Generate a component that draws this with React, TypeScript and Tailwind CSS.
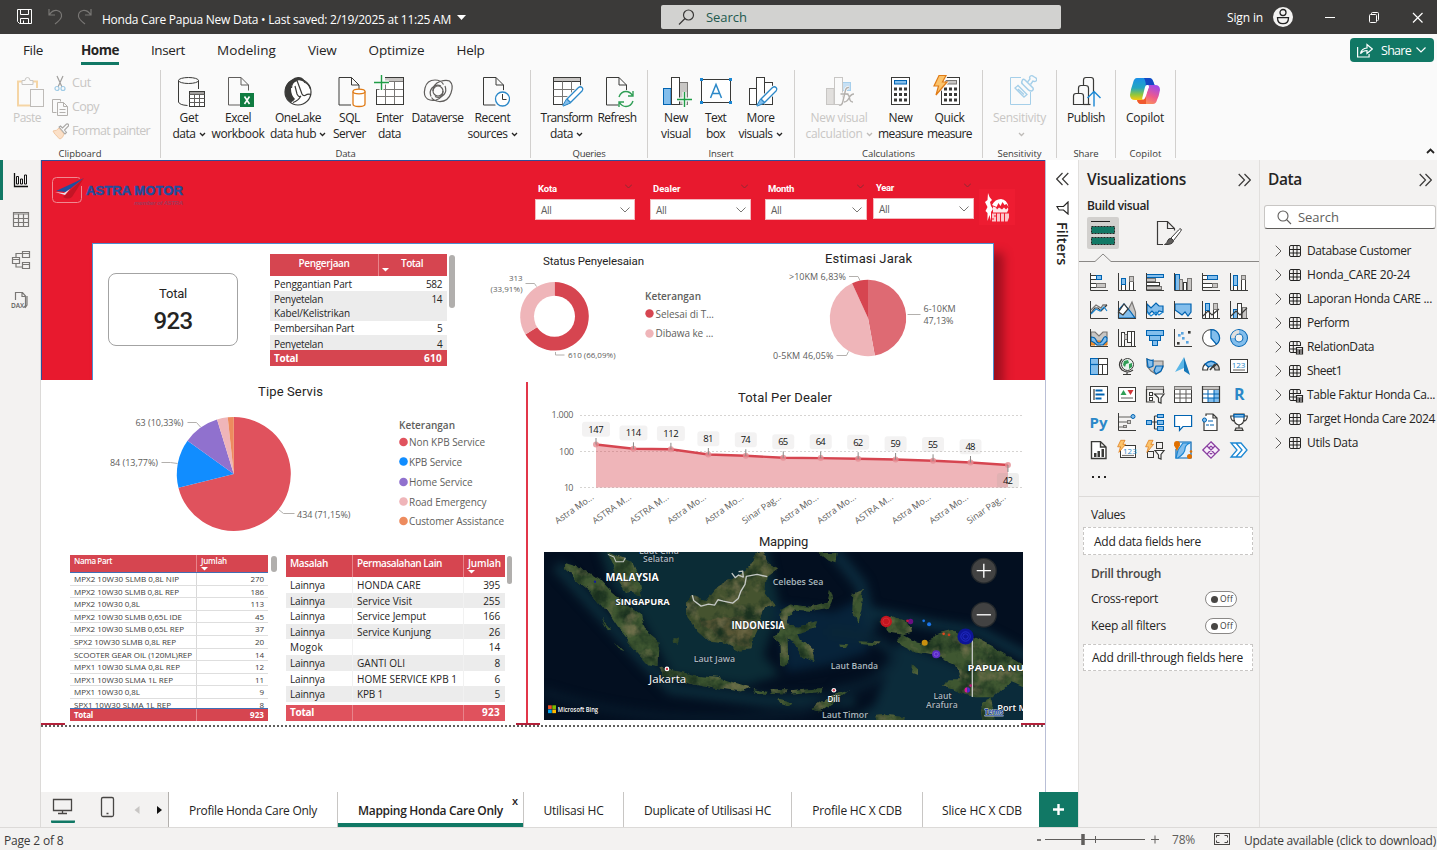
import React, { useLayoutEffect, useRef, useState } from "react";

const INK = "#3a3a38";
const BLUE = "#0063b1";
const SKY = "#83beec";
const GREY = "#c8c6c4";

/* Text that is tracked so that it takes up the given width. */
function Fit({ t, w, className = "" }: { t: string; w: number; className?: string }) {
  const ref = useRef<HTMLSpanElement>(null);
  const [ls, setLs] = useState(0);
  useLayoutEffect(() => {
    if (ref.current) setLs((w - ref.current.getBoundingClientRect().width) / t.length);
  }, []);
  return (
    <span ref={ref} className={"inline-block self-start whitespace-nowrap " + className} style={{ letterSpacing: ls + "px" }}>
      {t}
    </span>
  );
}

/* Chart text, vertically centred on y. */
function Tx({ x, y, w, s = 9, fill = "#605e5c", a = "start", b = 400, f = "Open Sans", children, rot }: any) {
  return (
    <text
      x={x}
      y={y + s * 0.36}
      textLength={w}
      fontSize={s}
      fill={fill}
      textAnchor={a}
      fontWeight={b}
      fontFamily={`"${f}", "Liberation Sans", sans-serif`}
      transform={rot}
    >
      {children}
    </text>
  );
}

const Chev = ({ c = "#252423" }: { c?: string }) => (
  <svg width="7" height="5" viewBox="0 0 7 5" fill="none" className="ml-[3px]">
    <path d="M1 1l2.5 2.5L6 1" stroke={c} strokeWidth="1.3" />
  </svg>
);

/* ---------- Ribbon icons, 34 x 34 ---------- */
const Doc = ({ x = 6.5, c = INK }: { x?: number; c?: string }) => (
  <g transform={`translate(${x} 3.5)`} fill="none" stroke={c}>
    <path d="M12 27.5H0V0h12.5l7.5 7.5V13" />
    <path d="M12.5 0v7.5H20" />
  </g>
);
const Pencil = ({ x, y }: { x: number; y: number }) => (
  <g transform={`translate(${x} ${y})`}>
    <path d="M5 13L16.5 1.5q2-1.5 3.500 0t0 3.500L8.500 16.500z" fill="#fff" stroke="#fafafa" strokeWidth="3" />
    <path d="M5 13L16.500 1.500q2-1.500 3.500 0t0 3.500L8.500 16.500z" fill="#fff" stroke="#2b88c8" strokeWidth="1.300" />
    <path d="M4.500 13l4 4-7 3q-1 0-.5-1z" fill={SKY} stroke="#2b88c8" />
  </g>
);
const Plus = ({ x, y }: { x: number; y: number }) => (
  <g transform={`translate(${x} ${y})`}>
    <path d="M-7.500 0h15M0-7.500v15" stroke="#fafafa" strokeWidth="4" />
    <path d="M-7.500 0h15M0-7.500v15" stroke="#1f9d46" strokeWidth="1.400" />
  </g>
);
const Calc = ({ x = 0 }: { x?: number }) => (
  <g transform={`translate(${x} 0)`}>
    <rect x="7.500" y="3.500" width="18" height="27" fill="#fff" stroke={INK} />
    {[0, 1, 2].map((r) => [0, 1, 2].map((c) => <rect key={r + "" + c} x={10 + c * 5} y={13.500 + r * 5.500} width="3" height="3" fill={INK} />))}
  </g>
);
const Bolt = ({ s = 1 }: { s?: number }) => (
  <path transform={`scale(${s})`} d="M6 .5h7L9.500 7H14L3 20l2.500-9H1z" fill="#fbc36b" stroke="#e07b16" strokeWidth="1.200" />
);

const ribbonArt: Record<string, React.ReactNode> = {
  get: (
    <g fill="none" stroke={INK}>
      <path d="M6.500 6.500V28q1 3 9 3.500M26.500 6.500V15" />
      <ellipse cx="16.500" cy="6.500" rx="10" ry="3" />
      <rect x="17.500" y="17.500" width="15" height="15" fill="#fff" />
      <path d="M18 19h14" strokeWidth="2" stroke="#a19f9d" />
      <path d="M17.500 20.500h15M17.500 24.500h15M17.500 28.500h15M22.500 20v12M27.500 20v12" stroke="#605e5c" />
    </g>
  ),
  excel: (
    <g>
      <Doc c="#605e5c" x={7.5} />
      <rect x="19" y="19" width="14" height="14" fill="#107c41" />
      <path d="M23.500 22.500l5 7.500M28.500 22.500l-5 7.500" stroke="#fff" strokeWidth="1.600" />
    </g>
  ),
  lake: (
    <g fill="none" stroke={INK} strokeWidth="1.200">
      <circle cx="17" cy="18" r="13" fill="#fff" />
      <path d="M11 5.500Q14 2.500 18 3q5 .5 6.500 6-5-4-9.500-2-5 2-5 8 0 6 4 10-3 4-4.500 3Q3.500 24 4 16.500 4.500 9 11 5.500z" fill={INK} stroke="none" />
      <path d="M10.500 14q0-6 5.500-7.500L21 20q1 2 3 1.500 3-2 6-1M20 22q-3 5-8 6.500M14 12l2 8q2 4 4 2M23 8q5 2 6.500 7" />
    </g>
  ),
  sql: (
    <g>
      <Doc x={6} />
      <path d="M20 17.500v12.500q0 2.500 6 2.500t6-2.500V17.500" fill="#fff" stroke="#e07b16" strokeWidth="1.300" />
      <ellipse cx="26" cy="17.500" rx="6" ry="2.300" fill="#fff" stroke="#e07b16" strokeWidth="1.300" />
    </g>
  ),
  enter: (
    <g fill="none" stroke={INK}>
      <rect x="3.500" y="3.500" width="27" height="27" fill="#fff" />
      <rect x="4" y="4" width="26" height="3" fill={GREY} stroke="none" />
      <path d="M3.500 7.500h27M3.500 15.500h27M3.500 22.500h27M12.500 7.500v23M21.500 7.500v23" stroke="#797775" />
      <path d="M0 0h12v15H0z" fill="#fafafa" stroke="none" />
      <Plus x={8.5} y={8.5} />
      <path d="M3.500 16v14.500h27V3.500" />
    </g>
  ),
  verse: (
    <g fill="none" stroke="#605e5c" strokeWidth="1.200">
      <circle cx="17" cy="17" r="5" />
      <path d="M22 17q0 7-7 9-5 1-8.500-1Q2 22 4 14q2-8 10-8 6 0 8.500 4.500M12 17q0-7 7-9.500 6-2 9.500-.5Q33 11 30 19q-3 9-12 8.500-5-.5-7.500-4" />
      <path d="M10 22.500q-2-5 1-8.500 4-4.500 9-2M24 12q2 5-1 8.500-4 4.500-9 2" />
    </g>
  ),
  recent: (
    <g>
      <Doc x={7.5} />
      <circle cx="26.500" cy="25" r="9" fill="#fafafa" />
      <circle cx="26.500" cy="25" r="7" fill="#fff" stroke="#2b88c8" strokeWidth="1.300" />
      <path d="M26.500 20v5.500h4" fill="none" stroke={INK} />
    </g>
  ),
  transform: (
    <g fill="none" stroke="#797775">
      <rect x="3.500" y="3.500" width="27" height="27" fill="#fff" stroke={INK} />
      <path d="M4 4h26v3.500H4z" fill={GREY} stroke="none" />
      <path d="M3.500 7.500h27" stroke={INK} />
      <path d="M3.500 15.500h27M3.500 22.500h27M12.500 7.500v23M21.500 7.500v23" />
      <path d="M16 32l8-8 8-10v18z" fill="#fafafa" stroke="none" />
      <Pencil x={12} y={12} />
    </g>
  ),
  refresh: (
    <g>
      <Doc x={6.5} />
      <circle cx="26" cy="25" r="9" fill="#fafafa" />
      <path d="M19 23q2-5.500 7-5.500 4 0 6.500 4M33 17v5h-5M33 27q-2 5.500-7 5.500-4 0-6.500-4M19 33v-5h5" fill="none" stroke="#2f9e55" strokeWidth="1.400" />
    </g>
  ),
  newvis: (
    <g>
      <rect x="4.500" y="14.500" width="7.500" height="16" fill={SKY} stroke={BLUE} />
      <rect x="20.500" y="8.500" width="8" height="22" fill={GREY} stroke="#797775" />
      <rect x="12.500" y="3.500" width="8" height="27" fill="#fff" stroke={INK} />
      <Plus x={25.5} y={25.5} />
    </g>
  ),
  textbox: (
    <g>
      <rect x="2.500" y="5.500" width="29" height="23" fill="#fff" stroke={INK} />
      {[1, 30].map((x) => [4, 27].map((y) => <rect key={x + "-" + y} x={x} y={y} width="3" height="3" fill="#1b87d3" />))}
      <path d="M11.500 24L17 10.500 22.500 24M13.500 19.500h7" fill="none" stroke="#2b88c8" strokeWidth="1.500" />
    </g>
  ),
  more: (
    <g fill="#fff" stroke={INK}>
      <rect x="5.500" y="14.500" width="7" height="16" />
      <rect x="20.500" y="8.500" width="8" height="22" />
      <rect x="12.500" y="3.500" width="8" height="27" />
      <Pencil x={12} y={12} />
    </g>
  ),
  fx: (
    <g>
      <rect x="4.500" y="14.500" width="7.500" height="16" fill="#e1dfdd" stroke={GREY} />
      <rect x="20.500" y="8.500" width="8" height="8" fill="#c7e0f4" stroke="#a7cfec" />
      <rect x="12.500" y="3.500" width="8" height="27" fill="#fafafa" stroke={GREY} />
      <path d="M17 31q3 1 4-4l2.500-11q1-3 3.500-2.500M18.500 20h8M24 20q3 0 3.500 4t3.500 4M32 20q-3 0-5 4t-5 4" fill="none" stroke="#fafafa" strokeWidth="3" />
      <path d="M17 31q3 1 4-4l2.500-11q1-3 3.500-2.500M18.500 20h8M24 20q3 0 3.500 4t3.500 4M32 20q-3 0-5 4t-5 4" fill="none" stroke="#b3b0ad" strokeWidth="1.400" />
    </g>
  ),
  calc: (
    <g>
      <Calc />
      <rect x="10.500" y="6.500" width="12" height="3.500" fill={SKY} stroke={BLUE} />
    </g>
  ),
  quick: (
    <g>
      <Calc x={1} />
      <rect x="12.500" y="6.500" width="11" height="3.500" fill={GREY} stroke="#797775" />
      <g transform="translate(0 1)">
        <path d="M6 0h9l-3 7h4L3 22l-2-8z" fill="#fafafa" />
        <Bolt />
      </g>
    </g>
  ),
  sens: (
    <g fill="none" stroke="#a5cfe9">
      <path d="M18 3.500H7.500v27h20V18" />
      <path d="M12 14l3-2.500 9 9L21 23zM15 15l6 5.500" strokeWidth="1.300" />
      <path d="M19 7q1-3 3-1l8 8q1 2-1.500 3-2 0-3-1l-5.500-5.500Q18 9 19 7z" fill="#fafafa" strokeWidth="1.500" />
      <path d="M24.500 8L27 5q-1-2 .5-3t3 .5L33 4q1.500 2 0 3t-3 0L27.500 10.500" strokeWidth="1.400" />
    </g>
  ),
  publish: (
    <g fill="#fafafa" stroke={INK} strokeWidth="1.200">
      <path d="M14.500 12V6q0-2.500 2.500-2.500h5q2.500 0 2.500 2.500v24.500h-5V20" />
      <path d="M9.500 20v-6q0-2.500 2.500-2.500h4.500q3 0 3 2.500v16.500h-5" />
      <path d="M4.500 30.500V22q0-2.500 2.500-2.500h5q2.500 0 2.500 2.500v8.500z" />
      <path d="M20.500 18h12v14h-12z" stroke="none" />
      <path d="M14.500 30.500h7" />
      <path d="M25 32.500v-14M18.500 24l6.500-6.500 6.500 6.500" fill="none" stroke="#1b87d3" strokeWidth="1.400" />
    </g>
  ),
  copilot: (
    <g>
      <defs>
        <linearGradient id="cpA" x1="0" y1="0" x2="0" y2="1">
          <stop offset="0" stopColor="#1a8fe8" />
          <stop offset=".45" stopColor="#23a6c0" />
          <stop offset=".75" stopColor="#8ec63f" />
          <stop offset="1" stopColor="#f9c80e" />
        </linearGradient>
        <linearGradient id="cpB" x1=".7" y1="0" x2=".2" y2="1">
          <stop offset="0" stopColor="#a44be8" />
          <stop offset=".5" stopColor="#ee5a8c" />
          <stop offset="1" stopColor="#ffa04d" />
        </linearGradient>
      </defs>
      <path d="M9 4h12q3 0 4 3l1.500 4h-5q-3 0-4 4l-3 11H7q-5 0-5-5 1-7 3-12 1-5 4-5z" fill="url(#cpA)" />
      <path d="M16 4h5q3 0 4 3l1.500 4h-5q-3 0-4 4 1-7-1.500-11z" fill="#1448c4" />
      <path d="M25 30H13q-3 0-4-4h5q3 0 4-4l3-11h6q5 0 5 5-1 6-3 10-1 4-4 4z" fill="url(#cpB)" />
      <path d="M18 30h-5q-3 0-4-4h5q3 0 4-4z" fill="#f0592e" />
      <path d="M20 11h-1q-1.500 0-2 2l-3 12q2 0 3-2l4-10z" fill="#fff" />
    </g>
  ),
};

type Btn = { i: string; w: number; a: [string, number]; b?: [string, number]; chev?: boolean; dim?: boolean };
const RibbonButton = ({ d }: { d: Btn }) => (
  <div className={"flex flex-col items-center text-[12px] leading-4 " + (d.dim ? "text-[#c8c6c4]" : "text-[#252423]")} style={{ width: d.w }}>
    <svg width="34" height="34" viewBox="0 0 34 34" className="shrink-0">
      {ribbonArt[d.i]}
    </svg>
    <div className="mt-[2px] h-4">
      <Fit t={d.a[0]} w={d.a[1]} />
    </div>
    <div className="flex h-4 items-center">
      {d.b && <Fit t={d.b[0]} w={d.b[1]} />}
      {d.chev && <Chev c={d.dim ? "#bebbb8" : "#252423"} />}
    </div>
  </div>
);
const Group = ({ w, pl, label, lw, items, children }: { w: string; pl?: string; label: string; lw: number; items?: Btn[]; children?: React.ReactNode }) => (
  <div className={"my-[2px] flex flex-col border-r border-[#d2d0ce] pt-1 " + w}>
    <div className={"flex h-[74px] shrink-0 " + (pl || "")}>
      {items && items.map((d, k) => <RibbonButton key={k} d={d} />)}
      {children}
    </div>
    <div className="flex h-3 justify-center text-[9.500px] leading-[12px] text-[#3b3a39]">
      <Fit t={label} w={lw} />
    </div>
  </div>
);

/* ---------- Visualization gallery icons, 18 x 18 ---------- */
const r = (x: number, y: number, w: number, h: number, k: "b" | "g" | "w" | "s" | "o" = "b") => {
  const m = { b: [SKY, BLUE], g: [GREY, "#797775"], w: ["#fff", INK], s: [INK, INK], o: ["none", INK] }[k];
  return <rect key={[x, y, w, h].join()} x={x + 0.5} y={y + 0.5} width={w} height={h} fill={m[0]} stroke={m[1]} />;
};
const ax = <path d="M.5 0v17.500H18" fill="none" stroke={INK} />;
const P = (d: string, s: string = INK, f: string = "none", w: number = 1.2) => <path key={d} d={d} stroke={s} fill={f} strokeWidth={w} />;
const T = (t: string, x: number, y: number, s: number, b = 400, c = "#2b88c8") => (
  <text x={x} y={y} fontSize={s} fontWeight={b} fill={c} fontFamily='"Open Sans", sans-serif'>
    {t}
  </text>
);
const vizIcons: React.ReactNode[] = [
  <>{r(0, 2, 6, 4, "w")}{r(6, 2, 5, 4)}{r(0, 10, 6, 4, "w")}{r(6, 10, 9, 4, "g")}{ax}</>,
  <>{r(3, 11, 4, 6, "w")}{r(3, 5, 4, 6)}{r(11, 8, 4, 9, "w")}{r(11, 3, 4, 5, "g")}{ax}</>,
  <>{r(0, 1, 17, 3)}{r(0, 5, 9, 3, "g")}{r(0, 9, 13, 3, "w")}{r(0, 13, 15, 3, "g")}{ax}</>,
  <>{r(1, 1, 4, 16)}{r(5, 6, 3, 11, "g")}{r(9, 9, 3, 8, "w")}{r(13, 5, 4, 12, "g")}{ax}</>,
  <>{r(0, 2, 5, 4, "w")}{r(5, 2, 10, 4)}{r(0, 10, 10, 4, "w")}{r(10, 10, 5, 4, "g")}{ax}</>,
  <>{r(3, 12, 4, 5, "w")}{r(3, 2, 4, 10)}{r(11, 6, 4, 11, "w")}{r(11, 2, 4, 4, "g")}{ax}</>,
  <>{ax}{P("M1 9l5-5 5 3 2-3h4", "#797775", "none", 1.3)}{P("M1 12l4-5 3 0 3 3 6-6", INK)}{P("M1 13l5-5 4 2 4-4 3 4", "#1b87d3")}</>,
  <>{P("M6 17L14 1l3.500 10v6z", "#797775", GREY)}{P("M.5 17V9L6 3l6 7 5 7z", BLUE, SKY)}{P("M.5 11L6 3l4 5-5 6z", INK, "#fff")}{ax}</>,
  <>{P("M1 3l4 4 5-5 3 3h4v6l-4-1-3 4-4-4-3 3-2-3z", BLUE, SKY)}{P("M1 11l4 4 5-4 3 3 4-3", "#1b87d3")}{ax}</>,
  <>{P("M1 3h16v8l-3 4-3-4-3 3-4-3-3-2z", BLUE, SKY)}{ax}</>,
  <>{r(3, 9, 4, 8, "w")}{r(3, 2, 4, 7)}{r(11, 8, 4, 9, "w")}{r(11, 2, 4, 6, "g")}{P("M1 15l5-5 4 4 7-6")}{ax}</>,
  <>{r(3, 8, 4, 9)}{r(7, 2, 4, 15, "w")}{r(12, 6, 4, 11, "g")}{P("M1 15l5-5 4 4 7-7")}{ax}</>,
  <>{P("M1 3h4l4 4 4-4h4v6l-4 4H8L1 8z", "#797775", GREY)}<path d="M1 12h4v4H1zM7 12h4v4H7zM13 12h4v4h-4z" fill="#f0953c" stroke="#e07b16" />{P("M1 8q4 0 5 3t3 3 4-4 4-1v3l-4 4H7q-3-3-6-4z", BLUE, SKY)}{ax}</>,
  <>{r(3, 3, 3, 14, "w")}{r(6, 5, 3, 5, "g")}{r(9, 2, 4, 11, "w")}{r(13, 2, 3, 15, "w")}{ax}</>,
  <>{r(0, 1, 17, 5)}{r(3, 6, 11, 5)}{r(6, 11, 5, 5)}</>,
  <>{ax}{[[4, 5, 0], [8, 8, 0], [14, 2, 1], [3, 13, 1], [12, 12, 0], [7, 3, 0]].map((q, i) => <rect key={i} x={q[0]} y={q[1]} width="2.600" height="2.600" fill={q[2] ? INK : "#5aa5e0"} />)}</>,
  <><circle cx="9" cy="9" r="8.400" fill="#fff" stroke={INK} />{P("M9 .6A8.400 8.400 0 0 1 14.500 15.400L9 9z", BLUE, SKY)}</>,
  <><circle cx="9" cy="9" r="6.200" fill="none" stroke={BLUE} strokeWidth="5.600" /><circle cx="9" cy="9" r="6.200" fill="none" stroke={SKY} strokeWidth="3.600" /><path d="M2.800 9A6.200 6.200 0 0 1 9 2.800" fill="none" stroke="#e1dfdd" strokeWidth="3.600" /></>,
  <>{r(0, 1, 8, 16)}{r(8, 1, 9, 6, "w")}{r(8, 7, 4, 10, "w")}{r(12, 7, 5, 10, "w")}{P("M.5 7.500h8", BLUE)}</>,
  <><circle cx="9.500" cy="7.500" r="6" fill="#e8f4ee" stroke={INK} /><path d="M6 4l4-1 1 3-3 1-1 3-2-2zM11 7l3-1v4l-3 2z" fill="#2f9e55" />{P("M4 2q-5 6 0 11 6 4 11 0M9 15v2M5 17.500h8")}</>,
  <>{P("M1 2l4 2h12v6l-3 5-4 2-5-3-4-5z", "#797775", GREY)}{P("M1 2q4 2 6 1v6q-3 2-5 1z", BLUE, SKY)}{P("M10 9h7l-2 5-5 3-2-3z", BLUE, SKY)}</>,
  <><path d="M10 0l6 18-6-4z" fill="#1577b8" /><path d="M10 0L1 15l9-4z" fill="#5bb7e8" /></>,
  <>{P("M.7 13q0-4 2.500-6l3.300 3q-1 1-1 3z", INK, "#fff")}{P("M3.200 7q6-5.500 11.600 0l-3.300 3q-2.500-2-5 0z", BLUE, SKY)}{P("M14.800 7q2.500 2 2.500 6h-4.300q0-2-1.500-3z", INK, GREY)}{P("M8 13l5-6", INK, "none", 1.6)}</>,
  <>{r(0, 2, 17, 13, "w")}{T("123", 1.7, 10.5, 8)}{P("M3 13h12", "#797775")}</>,
  <>{r(0, 1, 17, 16, "w")}{P("M4 4v11", INK)}{P("M5.500 5.500h7M5.500 9.500h9M5.500 13.500h6", BLUE, "none", 2)}</>,
  <>{r(0, 2, 17, 14, "w")}<path d="M2.500 10L5.500 5l3 5z" fill="#2f9e55" /><path d="M9.500 5h6l-3 5z" fill="#d13438" />{P("M3 13h12", "#797775")}</>,
  <>{r(0, 1, 17, 3, "g")}{P("M.5 4v13H9M17.500 4v4")}{r(3, 7, 3, 3, "w")}{r(3, 12, 3, 3, "w")}{P("M8.500 9h9.500L15 13v5l-2.500-1v-4z", INK, "#fff")}</>,
  <>{r(0, 1, 17, 16, "w")}{r(0, 1, 17, 3, "g")}{P("M.5 9h17M.5 13h17M6 5v12M12 5v12", "#605e5c", "none", 1)}</>,
  <>{r(0, 1, 17, 16, "w")}<path d="M12 5h6v12H6v-4h6z" fill={SKY} />{P("M.5 9h17M.5 13h17M6 5v12M12 5v12", BLUE, "none", 1)}{r(0, 1, 17, 3, "g")}{P("M.5 1v16.500H17.500V1")}</>,
  <>{T("R", 4, 15, 16, 700)}</>,
  <>{T("Py", -0.5, 14.5, 15, 700)}</>,
  <>{ax}{P("M1 4h12M1 9h8M1 14h4", "#605e5c")}<circle cx="15" cy="3.500" r="2" fill={SKY} stroke={BLUE} />{r(9, 7, 3, 3, "g")}{r(5, 12, 3, 2, "g")}</>,
  <>{P("M5 9h6M8.500 3v13M8.500 3H12M8.500 16H12")}{r(0, 7, 5, 4)}{r(11, 1, 6, 3)}{r(11, 7, 6, 4)}{r(11, 13, 6, 4)}</>,
  <>{P("M.6 2.500h17v11H9l-3.500 4v-4H.6z", BLUE, "#fff")}</>,
  <>{P("M2 9v8.500h13V5L11 1H4v2M11 1v4h4", INK, "#fff")}<circle cx="2.500" cy="7" r="2" fill={SKY} stroke={BLUE} />{P("M6 8h5M4 12h3M8 12h4", BLUE)}</>,
  <>{P("M4 1h10v5q0 5-5 6-5-1-5-6zM4 3H.7q0 5 4.500 5.500M14 3h3.300q0 5-4.500 5.500", INK, "#fff")}{P("M4 1.500h10v2.500H4z", BLUE, SKY)}{P("M9 12v3M5 17.500h8l-1-2.500H6z", INK, GREY)}</>,
  <>{P("M1.500.6h9L16 6v11.500H1.500zM10.500.6V6H16", INK, "#fff", 1.4)}<path d="M4 12h2.500v4H4zM7.500 10H10v6H7.500zM11.500 8H14v8h-2.500z" fill={INK} /></>,
  <>{r(2, 4, 15, 12, "w")}{T("123", 5, 12.5, 8)}{P("M4 14.500h12", "#797775")}<g transform="translate(-1 -1)"><Bolt s={0.62} /></g></>,
  <>{r(10, 1, 6, 6, "o")}{r(1, 10, 6, 6, "o")}{P("M9 9.500h9L15 13.500V18l-2.500-1v-3z", INK, "#fff")}<g transform="translate(-1 -1)"><Bolt s={0.62} /></g></>,
  <>{P("M4 1h13v16H2V8", BLUE, "#e5f1fb")}{P("M16 2q-5 2-5 6t-7 9H2l2-8 5-7z", "#1b87d3", SKY)}<circle cx="3" cy="3" r="3" fill="#e07000" /><path d="M0 4h6l-3 6z" fill="#e07000" /><circle cx="15.500" cy="15.500" r="2.500" fill="#e07000" /><circle cx="17" cy="10.500" r="1.300" fill="#e07000" /></>,
  <>{P("M9 .8L17.200 9 9 17.200.8 9z", "#8a3fa0", "#f8eefb", 1.3)}{P("M5 5l8 8M13 5l-8 8M9 5l2.500 2.500M9 13l-2.500-2.500M9 5L6.500 7.500M9 13l2.500-2.500", "#8a3fa0", "none", 1.1)}</>,
  <>{P("M1 2h10l6 7-6 7H1l6-7zM6 2l6 7-6 7", "#1b87d3", "#fff", 1.3)}</>,
];

/* ---------- Tables ---------- */
const parts: [string, number, string][] = [
  ["MPX2 10W30 SLMB 0,8L NIP", 105, "270"],
  ["MPX2 10W30 SLMB 0,8L REP", 105, "186"],
  ["MPX2 10W30 0,8L", 66, "113"],
  ["MPX2 10W30 SLMB 0,65L IDE", 108, "45"],
  ["MPX2 10W30 SLMB 0,65L REP", 110, "37"],
  ["SPX2 10W30 SLMB 0,8L REP", 102, "20"],
  ["SCOOTER GEAR OIL (120ML)REP", 118, "14"],
  ["MPX1 10W30 SLMA 0,8L REP", 106, "12"],
  ["MPX1 10W30 SLMA 1L REP", 99, "11"],
  ["MPX1 10W30 0,8L", 66, "9"],
  ["SPX1 10W30 SLMA 1L REP", 97, "8"],
];
const issues: [string, number, string, number, string][] = [
  ["Lainnya", 35, "HONDA CARE", 64, "395"],
  ["Lainnya", 35, "Service Visit", 55, "255"],
  ["Lainnya", 35, "Service Jemput", 69, "166"],
  ["Lainnya", 35, "Service Kunjung", 74, "26"],
  ["Mogok", 33, "", 0, "14"],
  ["Lainnya", 35, "GANTI OLI", 48, "8"],
  ["Lainnya", 35, "HOME SERVICE KPB 1", 100, "6"],
  ["Lainnya", 35, "KPB 1", 26, "5"],
];
const Caret = () => (
  <svg width="7" height="4" viewBox="0 0 7 4" className="shrink-0">
    <path d="M0 0h7L3.500 3.500z" fill="#fff" />
  </svg>
);

const WRow = ({ a, w, v, vw, c }: { a: string; w: number; v: string; vw: number; c: string }) => (
  <div className={"flex justify-between overflow-hidden pl-1 pr-[5px] " + c}>
    <Fit t={a} w={w} />
    <Fit t={v} w={vw} />
  </div>
);
const WorkTable = () => (
  <div className="ml-8 mt-[10px] flex h-[112px] w-[177px] flex-col overflow-hidden text-[10px] leading-[14px] text-[#252423]">
    <div className="flex h-[22px] shrink-0 bg-[#d64550] font-semibold text-white">
      <div className="flex w-[109px] justify-center border-r border-[#e8848b] pt-[2px]"><Fit t="Pengerjaan" w={51} /></div>
      <div className="flex grow pt-[2px]">
        <div className="ml-[3px] mt-[12px]"><Caret /></div>
        <div className="ml-[12px]"><Fit t="Total" w={22} /></div>
      </div>
    </div>
    <WRow a="Penggantian Part" w={78} v="582" vw={16} c="h-[15px] shrink-0 pt-[1px]" />
    <div className="flex h-[30px] shrink-0 justify-between bg-[#ececec] pl-1 pr-[5px] pt-[1px]">
      <div className="flex flex-col"><Fit t="Penyetelan" w={49} /><Fit t="Kabel/Kelistrikan" w={76} /></div>
      <Fit t="14" w={10.500} />
    </div>
    <WRow a="Pembersihan Part" w={80} v="5" vw={5} c="h-[14px] shrink-0" />
    <WRow a="Penyetelan" w={49} v="4" vw={5} c="h-[15px] shrink-0 pt-[2px] bg-[#ececec]" />
    <WRow a="Total" w={24} v="610" vw={18} c="h-[16px] shrink-0 pt-[1px] bg-[#d64550] text-white font-bold" />
  </div>
);

const PartsTable = () => (
  <div className="flex h-[166px] w-[198px] flex-col overflow-hidden text-[8px] text-[#3b3a39]">
    <div className="flex h-[18px] shrink-0 border-b border-[#3f6fb5] bg-[#d64550] font-semibold text-white">
      <div className="w-[127px] border-r border-[#e8848b] pl-1 leading-[12px]"><Fit t="Nama Part" w={38} /></div>
      <div className="flex flex-col pl-[4px] leading-[12px]"><Fit t="Jumlah" w={26} /><Caret /></div>
    </div>
    <div className="h-[135px] shrink-0 overflow-hidden">
      {parts.map((p) => (
        <div key={p[0]} className="flex h-[12.600px] border-b border-[#dedede] leading-[11px]">
          <div className="w-[127px] border-r border-[#d8d8d8] pl-1"><Fit t={p[0]} w={p[1]} /></div>
          <div className="grow pr-1 text-right"><Fit t={p[2]} w={p[2].length * 4.500} /></div>
        </div>
      ))}
    </div>
    <div className="flex h-[13px] shrink-0 border-t border-[#3f6fb5] bg-[#d64550] font-bold leading-[12px] text-white">
      <div className="w-[127px] border-r border-[#e8848b] pl-1"><Fit t="Total" w={19} /></div>
      <div className="grow pr-1 text-right"><Fit t="923" w={14} /></div>
    </div>
  </div>
);
const IssuesTable = () => (
  <div className="flex h-[166px] w-[219px] flex-col overflow-hidden text-[10px] leading-[15.600px] text-[#252423]">
    <div className="flex h-[22px] shrink-0 bg-[#d64550] font-semibold text-white">
      <div className="w-[67px] border-r border-[#e8848b] pl-1 pt-[1px]"><Fit t="Masalah" w={38} /></div>
      <div className="w-[111px] border-r border-[#e8848b] pl-1 pt-[1px]"><Fit t="Permasalahan Lain" w={85} /></div>
      <div className="flex flex-col pl-1 pt-[1px]"><Fit t="Jumlah" w={33} className="h-[14px]" /><Caret /></div>
    </div>
    {issues.map((p, k) => (
      <div key={k} className={"flex h-[15.600px] shrink-0 " + (k % 2 ? "bg-[#ececec]" : "")}>
        <div className="w-[67px] border-r border-[#f1f1f1] pl-1 pt-[1px]"><Fit t={p[0]} w={p[1]} /></div>
        <div className="w-[111px] border-r border-[#f1f1f1] pl-1 pt-[1px]">{p[2] && <Fit t={p[2]} w={p[3]} />}</div>
        <div className="grow pr-[5px] pt-[1px] text-right"><Fit t={p[4]} w={p[4].length * 5.600} /></div>
      </div>
    ))}
    <div className="mt-[3px] flex h-[16px] shrink-0 bg-[#e0525d] font-bold text-white">
      <div className="w-[67px] border-r border-[#e8848b] pl-1"><Fit t="Total" w={24} /></div>
      <div className="w-[111px] border-r border-[#e8848b]" />
      <div className="grow pr-[5px] text-right"><Fit t="923" w={18} /></div>
    </div>
  </div>
);

/* ---------- Charts ---------- */
const slice = (cx: number, cy: number, rad: number, a0: number, a1: number) => {
  const p = (a: number) => `${cx + rad * Math.sin(a * 2 * Math.PI)} ${cy - rad * Math.cos(a * 2 * Math.PI)}`;
  return `M${cx} ${cy}L${p(a0)}A${rad} ${rad} 0 ${a1 - a0 > 0.5 ? 1 : 0} 1 ${p(a1)}z`;
};
const Lead = ({ d }: { d: string }) => <path d={d} fill="none" stroke="#b3b0ad" />;

const StatusDonut = () => (
  <svg width="260" height="136" viewBox="480 244 260 136" className="ml-[25px] shrink-0">
    <Tx x={543} y={261} w={101} s={11.5} fill="#252423" f="Roboto">Status Penyelesaian</Tx>
    <path d={slice(554.5, 316.3, 34.3, 0, 0.6609)} fill="#d64550" />
    <path d={slice(554.5, 316.3, 34.3, 0.6609, 1)} fill="#efb5b9" />
    <circle cx="554.500" cy="316.300" r="20.500" fill="#fff" />
    <Lead d="M525.500 283.500h9l2 3" />
    <Lead d="M555.500 352v3h9" />
    <Tx x={509} y={278} w={13.500} s={8}>313</Tx>
    <Tx x={490.500} y={289} w={32} s={8}>(33,91%)</Tx>
    <Tx x={568} y={355} w={47.500} s={8}>610 (66,09%)</Tx>
    <Tx x={645} y={296.500} w={56} s={10} b={600}>Keterangan</Tx>
    <circle cx="649.500" cy="313.500" r="4.200" fill="#d64550" />
    <Tx x={655.500} y={314} w={58.500} s={10}>Selesai di T...</Tx>
    <circle cx="649.500" cy="333.500" r="4.200" fill="#efb5b9" />
    <Tx x={655.500} y={333.500} w={58} s={10}>Dibawa ke ...</Tx>
  </svg>
);
const DistancePie = () => (
  <svg width="240" height="136" viewBox="750 244 240 136" className="ml-[10px] shrink-0">
    <Tx x={825} y={258.500} w={87} s={13} fill="#252423" f="Roboto">Estimasi Jarak</Tx>
    <path d={slice(868, 318, 38.200, 0, 0.4713)} fill="#de6a73" />
    <path d={slice(868, 318, 38.200, 0.4713, 0.9317)} fill="#efb5b9" />
    <path d={slice(868, 318, 38.200, 0.9317, 1)} fill="#d64550" />
    <Lead d="M849 276.500h9l2 4" />
    <Lead d="M907.500 314.500h13" />
    <Lead d="M836.500 355.500h10l2-4" />
    <Tx x={789} y={276.500} w={57} s={9}>{">10KM 6,83%"}</Tx>
    <Tx x={923.500} y={309} w={32} s={9}>6-10KM</Tx>
    <Tx x={923.500} y={320.500} w={30} s={9}>47,13%</Tx>
    <Tx x={773} y={355.500} w={60.500} s={9}>0-5KM 46,05%</Tx>
  </svg>
);
const services: [string, string, number, number][] = [
  ["Non KPB Service", "#e0525d", 442, 76],
  ["KPB Service", "#118dff", 461.5, 53],
  ["Home Service", "#9071ce", 482, 63.5],
  ["Road Emergency", "#efb5b9", 501.5, 77.5],
  ["Customer Assistance", "#ed8b5e", 521, 95],
];
const ServicePie = () => {
  const cut = [0, 0.7115, 0.8492, 0.9525, 0.983, 1];
  return (
    <svg width="485" height="175" viewBox="41 380 485 175" className="shrink-0">
      <Tx x={258} y={391} w={65} s={13} fill="#252423" f="Roboto">Tipe Servis</Tx>
      {services.map((s, i) => (
        <path key={i} d={slice(233.800, 474, 57, cut[i], cut[i + 1])} fill={s[1]} />
      ))}
      <Lead d="M187.500 422.500h9l4 4.500" />
      <Lead d="M161.500 462.500h9l7 1" />
      <Lead d="M278.500 509.500l5 4h11" />
      <Tx x={135.500} y={423} w={48} s={9}>63 (10,33%)</Tx>
      <Tx x={110} y={463} w={48} s={9}>84 (13,77%)</Tx>
      <Tx x={297} y={514.500} w={53.500} s={9}>434 (71,15%)</Tx>
      <Tx x={399} y={425.500} w={56} s={10} b={600}>Keterangan</Tx>
      {services.map((s) => (
        <g key={s[0]}>
          <circle cx="403.500" cy={s[2]} r="4.300" fill={s[1]} />
          <Tx x={409} y={s[2] + 0.5} w={s[3]} s={10}>{s[0]}</Tx>
        </g>
      ))}
    </svg>
  );
};
const dealers: [string, number, number, string][] = [
  ["147", 444.5, 429.3, "Astra Mo..."],
  ["114", 448.8, 433, "ASTRA M..."],
  ["112", 449.3, 433.500, "ASTRA M..."],
  ["81", 454.5, 438.800, "Astra Mo..."],
  ["74", 455.8, 439.800, "Astra Mo..."],
  ["65", 457.8, 441.700, "Sinar Pag..."],
  ["64", 458.1, 441.700, "Astra Mo..."],
  ["62", 458.7, 442.300, "Astra Mo..."],
  ["59", 459.5, 443.800, "ASTRA M..."],
  ["55", 460.8, 444.500, "Astra Mo..."],
  ["48", 462.5, 446.800, "Astra Mo..."],
  ["42", 465, 480.500, "Sinar Pag..."],
];
const DealerChart = () => {
  const X = (i: number) => 596 + i * 37.450;
  const line = dealers.map((d, i) => `${X(i)} ${d[1]}`).join("L");
  return (
    <svg width="516" height="151" viewBox="528 380 516 151" className="shrink-0">
      <Tx x={738} y={397.500} w={94} s={13} fill="#252423" f="Roboto">Total Per Dealer</Tx>
      {[415.500, 451.500, 487.500].map((y) => (
        <path key={y} d={`M580 ${y}H1022`} stroke="#d6d4d2" strokeDasharray="2 2" />
      ))}
      <Tx x={551.500} y={415} w={22} s={9}>1.000</Tx>
      <Tx x={559} y={451.500} w={15} s={9}>100</Tx>
      <Tx x={564} y={487.500} w={9.500} s={9}>10</Tx>
      <path d={`M596 487.500L${line}V487.500z`} fill="#d64550" opacity=".4" />
      <path d={`M${line}`} fill="none" stroke="#d64550" strokeWidth="2.400" />
      {dealers.map((d, i) => (
        <g key={i}>
          <circle cx={X(i)} cy={d[1]} r="3" fill="#e58d94" opacity=".8" />
          <path d={i === 11 ? `M${X(i)} 465V472` : `M${X(i)} ${d[1]}v-6.500`} stroke="#8a8886" />
          <rect x={X(i) - (i < 3 ? 14 : 11)} y={d[2] - 7.500} width={i < 3 ? 28 : 22} height="15" rx="3" fill="#a09e9c" opacity={i === 11 ? 0.18 : 0.13} />
          <Tx x={X(i)} y={d[2]} w={i < 3 ? 15.500 : 10} s={9.500} fill="#111" a="middle">{d[0]}</Tx>
          <Tx x={X(i) - 4} y={496} w={45} s={9} a="end" rot={`rotate(-35 ${X(i) - 4} 495)`}>{d[3]}</Tx>
        </g>
      ))}
    </svg>
  );
};

const land = [
  "M103 55L160 72 200 98 236 138 285 178 325 205 336 250 383 290 380 362 350 358 306 308 262 252 228 200 180 140 145 112 103 72z",
  "M228 22L262 38 300 50 318 90 331 155 305 143 285 146 262 110 245 60z",
  "M480 152L522 165 548 132 602 102 648 66 668 30 690 24 706 55 734 70 700 95 695 140 727 182 695 192 680 230 662 270 655 312 620 316 580 296 532 290 495 256 465 212 464 175z",
  "M385 370L440 378 500 392 555 398 602 415 650 430 620 442 560 432 480 416 400 396z",
  "M656 432L702 440 700 446 660 442zM712 434L765 436 762 447 715 446zM772 438L866 428 862 440 776 448zM728 460L776 474 768 484 736 474zM836 492L870 468 900 445 944 432 910 462 860 498z",
  "M748 192L770 178 830 185 880 170 888 132 897 160 884 188 830 198 782 194 764 215 760 238 798 242 850 228 842 248 790 262 800 285 834 318 842 348 808 332 785 292 762 280 764 356 740 358 738 292 722 280 736 250z",
  "M856 21L907 21 904 52 884 44z",
  "M956 150L984 138 978 188 966 232 954 196zM972 288L1040 292 1036 300 978 297zM912 292L942 294 936 304 914 302z",
  "M1040 226L1075 214 1115 228 1132 262 1104 270 1142 292 1178 300 1196 268 1250 254 1312 275 1380 310 1440 345 1462 360 1462 425 1422 408 1372 456 1315 456 1260 436 1222 424 1236 402 1276 402 1260 360 1200 332 1140 322 1100 302 1084 284 1100 268 1058 262z",
  "M1130 355L1148 372 1144 392 1128 386zM1334 470L1364 456 1376 530 1342 530zM1024 512L1050 508 1112 516 1110 528 1030 528zM424 276L444 278 440 292 426 290zM212 218L240 250 230 252zM250 290L280 318 268 314z",
];
const MapLabel = ({ x, y, s, w, b = 700, c = "#fff", children }: any) => (
  <text x={x} y={y + s * 0.36} fontSize={s} textLength={w} lengthAdjust="spacingAndGlyphs" fontWeight={b} fill={c} stroke="#0a141c" strokeWidth="3" strokeOpacity=".7" paintOrder="stroke" fontFamily='"Open Sans", sans-serif'>
    {children}
  </text>
);
const MapVisual = () => (
  <svg width="479" height="168" viewBox="41 21 1418 503" preserveAspectRatio="none" className="block">
    <defs>
      <filter id="land" x="-5%" y="-5%" width="110%" height="110%" colorInterpolationFilters="sRGB">
        <feTurbulence type="fractalNoise" baseFrequency=".022" numOctaves="4" seed="4" result="n" />
        <feDisplacementMap in="SourceGraphic" in2="n" scale="22" xChannelSelector="R" yChannelSelector="G" result="d" />
        <feColorMatrix in="n" values="0 0 0 0 .10  0 0 0 0 .19  0 0 0 0 .12  2.4 0 0 0 -.95" result="k" />
        <feComposite in="k" in2="d" operator="in" result="kk" />
        <feColorMatrix in="n" values="0 0 0 0 .50  0 0 0 0 .47  0 0 0 0 .33  0 2 0 0 -1" result="t" />
        <feComposite in="t" in2="d" operator="in" result="tt" />
        <feMerge>
          <feMergeNode in="d" />
          <feMergeNode in="kk" />
          <feMergeNode in="tt" />
        </feMerge>
      </filter>
      <filter id="soft" x="-20%" y="-20%" width="140%" height="140%" colorInterpolationFilters="sRGB">
        <feGaussianBlur stdDeviation="14" />
      </filter>
    </defs>
    <path d="M0 0h1500v560H0z" fill="#030f20" />
    <g filter="url(#soft)">
      <path d="M200 0H700L740 190 690 330 740 390 640 420 420 390 330 220 240 120z" fill="#0b2c36" />
      <path d="M1090 290L1300 370 1500 400V560H880L1020 480z" fill="#0b2b3a" />
      <path d="M80 60L340 350 420 430 700 465 960 465" fill="none" stroke="#0b2a38" strokeWidth="38" />
      <path d="M720 180L900 200 1000 150 1000 320 880 360 760 380z" fill="#07233a" />
      <path d="M900 20L980 120 1010 260" fill="none" stroke="#0b2a3c" strokeWidth="36" />
      <path d="M1000 200L1200 240 1330 260 1500 350" fill="none" stroke="#0c2e3e" strokeWidth="30" />
      <path d="M880 260Q1060 270 1080 340 1040 420 900 440" fill="none" stroke="#0a2636" strokeWidth="26" />
      <path d="M40 440Q400 560 800 500L1050 400" fill="none" stroke="#071a2b" strokeWidth="24" />
    </g>
    <g filter="url(#land)">
      {land.map((d, i) => (
        <path key={i} d={d} fill={i === 2 ? "#45532f" : "#3f5731"} />
      ))}
      <path d="M500 225L655 210 650 305 580 290z" fill="#6b5a3c" opacity=".5" />
    </g>
    <g fill="none" stroke="#c3c7c4" strokeWidth="4" strokeLinejoin="round">
      <path d="M480 150L484 166 506 183 528 177 546 180 556 164 572 168 600 174 616 160 624 138 636 118 640 94 672 88 702 95" />
      <path d="M597 84l10 14 10-8 14 6-2-18-12 2" />
      <path d="M230 28l18 8 6 14 22 0 6-12" strokeWidth="3" />
      <path d="M1309 285V455" />
    </g>
    <MapLabel x={322} y={19} s={24} w={118} c="#a9b8c0" b={600}>Laut Cina</MapLabel>
    <MapLabel x={334} y={41} s={24} w={92} c="#a9b8c0" b={600}>Selatan</MapLabel>
    <MapLabel x={223} y={96} s={29} w={158}>MALAYSIA</MapLabel>
    <MapLabel x={253} y={170} s={25} w={160}>SINGAPURA</MapLabel>
    <MapLabel x={596} y={241} s={29} w={158}>INDONESIA</MapLabel>
    <MapLabel x={718} y={111} s={26} w={150} c="#a9b8c0" b={600}>Celebes Sea</MapLabel>
    <MapLabel x={484} y={340} s={25} w={123} c="#a9b8c0" b={600}>Laut Jawa</MapLabel>
    <MapLabel x={890} y={361} s={25} w={140} c="#a9b8c0" b={600}>Laut Banda</MapLabel>
    <MapLabel x={1194} y={453} s={25} w={54} c="#a9b8c0" b={600}>Laut</MapLabel>
    <MapLabel x={1172} y={479} s={25} w={94} c="#a9b8c0" b={600}>Arafura</MapLabel>
    <MapLabel x={864} y={509} s={25} w={136} c="#a9b8c0" b={600}>Laut Timor</MapLabel>
    <MapLabel x={352} y={400} s={34} w={110} b={400}>Jakarta</MapLabel>
    <MapLabel x={880} y={461} s={27} w={37} b={600}>Dili</MapLabel>
    <MapLabel x={1295} y={368} s={28} w={192}>PAPUA NUG</MapLabel>
    <MapLabel x={1383} y={487} s={28} w={88} b={600}>Port M</MapLabel>
    {[[405, 371], [899, 435]].map((p) => (
      <g key={p[0]}>
        <circle cx={p[0]} cy={p[1]} r="7" fill="#fff" />
        <circle cx={p[0]} cy={p[1]} r="3.500" fill="#d83b4b" />
      </g>
    ))}
    <circle cx="1054" cy="229" r="17" fill="#c4161f" />
    <circle cx="1054" cy="229" r="10" fill="none" stroke="#e2404a" strokeWidth="1.500" />
    <circle cx="1126" cy="229" r="8" fill="#6a0f80" />
    <circle cx="1117" cy="227" r="4" fill="#c4163a" />
    <circle cx="1165" cy="227" r="4" fill="#1b74e8" />
    <circle cx="1181" cy="237" r="6" fill="#1b74e8" />
    <circle cx="1224" cy="266" r="4" fill="#e2491e" />
    <circle cx="1240" cy="269" r="4" fill="#c8401a" />
    <circle cx="1168" cy="293" r="9" fill="#c8900f" />
    <circle cx="1202" cy="327" r="12" fill="#5a2bc4" />
    <circle cx="1202" cy="327" r="6" fill="none" stroke="#9c78ee" strokeWidth="1.500" />
    <circle cx="1289" cy="274" r="24" fill="#0d1496" />
    <circle cx="1289" cy="274" r="14" fill="none" stroke="#2a36d8" strokeWidth="2" />
    <circle cx="1289" cy="274" r="8" fill="none" stroke="#2a36d8" strokeWidth="2" />
    <path d="M1294 426a8 8 0 0 0 0 16z" fill="#d81b9a" />
    <path d="M1294 426a8 8 0 0 1 0 16z" fill="#4a2bd0" />
    <circle cx="1304" cy="421" r="4" fill="#c01878" />
    <rect x="189" y="107" width="6" height="6" fill="#141a9a" />
    {[77, 209].map((y) => (
      <g key={y}>
        <circle cx="1343" cy={y} r="39" fill="#22272b" />
        <circle cx="1343" cy={y} r="35" fill="#424242" />
        <path d={y === 77 ? "M1322 77h42M1343 56v42" : "M1322 209h42"} stroke="#fff" strokeWidth="4" />
      </g>
    ))}
    <path d="M53 480h11v11H53z" fill="#f25022" />
    <path d="M65.500 480h11v11h-11z" fill="#7fba00" />
    <path d="M53 492.500h11v11H53z" fill="#00a4ef" />
    <path d="M65.500 492.500h11v11h-11z" fill="#ffb900" />
    <MapLabel x={82} y={492} s={19} w={119} b={600}>Microsoft Bing</MapLabel>
    <text x="1346" y="507" fontSize="20" fontWeight="700" textLength="54" lengthAdjust="spacingAndGlyphs" fill="#1c3e9c" stroke="#dfe6ee" strokeWidth="2.500" paintOrder="stroke" textDecoration="underline" fontFamily='"Open Sans", sans-serif'>
      Terms
    </text>
  </svg>
);

const Slicer = ({ t, w, bw, cls }: { t: string; w: number; bw: string; cls: string }) => (
  <div className={"flex flex-col " + cls + " " + bw}>
    <div className="flex h-[15px] items-start justify-between pl-[3px] pr-[3px] font-['Roboto'] text-[9.500px] font-bold leading-[10px] text-white">
      <Fit t={t} w={w} />
      <svg width="7" height="5" viewBox="0 0 7 5" fill="none"><path d="M0 .5l3.500 3.500L7 .5" stroke="#8c2b33" /></svg>
    </div>
    <div className="flex h-[21px] items-center justify-between border border-[#f3b9be] bg-white pl-[5px] pr-1 text-[10px] leading-[21px] text-[#605e5c]">
      <Fit t="All" w={10.500} />
      <svg width="10" height="6" viewBox="0 0 10 6" fill="none"><path d="M.5.5L5 5 9.500.5" stroke="#797775" /></svg>
    </div>
  </div>
);

const dataTables: [string, number, boolean?][] = [
  ["Database Customer", 104],
  ["Honda_CARE 20-24", 103],
  ["Laporan Honda CARE ...", 125],
  ["Perform", 42],
  ["RelationData", 67, true],
  ["Sheet1", 35],
  ["Table Faktur Honda Ca...", 128, true],
  ["Target Honda Care 2024", 128],
  ["Utils Data", 51],
];

const Toggle = () => (
  <div className="flex h-[16px] w-[32px] items-center rounded-full border border-[#8a8886] bg-white pl-[5px]">
    <div className="h-[7px] w-[7px] rounded-full bg-[#484644]" />
    <Fit t="Off" w={13} className="ml-[2px] text-[8.500px] leading-[14px] text-[#3b3a39]" />
  </div>
);
const Dbl = ({ flip }: { flip?: boolean }) => (
  <svg width="13" height="14" viewBox="0 0 13 14" fill="none" className={flip ? "rotate-180" : ""}>
    <path d="M.7 1L6.500 7 .7 13M6.500 1l5.800 6-5.800 6" stroke="#3b3a39" strokeWidth="1.200" />
  </svg>
);

const pageTabs: [string, number, string][] = [
  ["Profile Honda Care Only", 128, "w-[169px]"],
  ["Mapping Honda Care Only", 145, "w-[186px]"],
  ["Utilisasi HC", 60, "w-[100px]"],
  ["Duplicate of Utilisasi HC", 127, "w-[168px]"],
  ["Profile HC X CDB", 89.5, "w-[131px]"],
  ["Slice HC X CDB", 80, "w-[116px] pl-[2px]"],
];

export default function App() {
  return (
    <div className="flex h-[850px] w-[1437px] flex-col overflow-hidden bg-[#fafafa] font-['Open_Sans','Liberation_Sans',sans-serif] text-[#252423]">
      {/* Title bar */}
      <div className="flex h-[34px] shrink-0 items-center bg-[#3b3a39] text-white">
        <svg width="80" height="18" viewBox="16 9 80 18" fill="none" className="ml-4 shrink-0">
          <path d="M17.500 10.500h14v14h-12l-2-2zM20.500 10.500v5h8v-5M20.500 24.500v-5h8v5M23.500 24.500v-3" stroke="#fff" />
          <path d="M49 10v6h6M49.500 15.500q3-4.500 7.500-4 5 1 4.500 6-.5 3-6.500 7.500" stroke="#797775" strokeWidth="1.200" />
          <path d="M91 10v6h-6M90.500 15.500q-3-4.500-7.500-4-5 1-4.500 6 .5 3 6.500 7.500" stroke="#797775" strokeWidth="1.200" />
        </svg>
        <Fit t="Honda Care Papua New Data • Last saved: 2/19/2025 at 11:25 AM" w={349} className="ml-[6px] text-[12px] leading-[40px]" />
        <svg width="9" height="5" viewBox="0 0 9 5" className="ml-[6px]"><path d="M0 0h9L4.500 5z" fill="#fff" /></svg>
        <div className="ml-[195px] flex h-[24px] w-[400px] items-center rounded-[2px] bg-[#d2d2d0] pl-[17px]">
          <svg width="17" height="17" viewBox="0 0 17 17" fill="none"><circle cx="10.500" cy="6" r="5" stroke="#3b3a39" strokeWidth="1.200" /><path d="M7 9.500L1 15.500" stroke="#3b3a39" strokeWidth="1.200" /></svg>
          <Fit t="Search" w={41} className="ml-[11px] text-[13px] leading-[24px] text-[#22594e]" />
        </div>
        <Fit t="Sign in" w={36} className="ml-[166px] text-[12px] leading-[35px]" />
        <svg width="20" height="20" viewBox="0 0 20 20" className="ml-[10px]">
          <circle cx="10" cy="10" r="10" fill="#f3f2f1" />
          <circle cx="10" cy="5.500" r="3" fill="none" stroke="#222" strokeWidth="1.300" />
          <path d="M4.500 10.700h11q0 6-5.500 6t-5.500-6z" fill="none" stroke="#222" strokeWidth="1.300" />
        </svg>
        <svg width="100" height="14" viewBox="1324 10 100 14" fill="none" className="ml-[31px]" stroke="#fff">
          <path d="M1325 17.500h10M1371.500 14.500v-1q0-1 1-1h5q1 0 1 1v6q0 1-1 1" />
          <rect x="1369.500" y="14.500" width="7" height="8" rx="1" fill="#3b3a39" />
          <path d="M1413 13l9.500 9.500M1422.500 13l-9.500 9.500" strokeWidth="1.200" />
        </svg>
      </div>

      {/* Menu */}
      <div className="flex h-[34px] shrink-0 items-start gap-8 pl-[23px] text-[13.500px] leading-[33px]">
        <Fit t="File" w={20} className="mr-[6px]" />
        <div className="flex flex-col">
          <Fit t="Home" w={38} className="h-[28px] font-bold" />
          <div className="h-[3px] w-[38px] bg-[#117865]" />
        </div>
        <Fit t="Insert" w={34} />
        <Fit t="Modeling" w={59} />
        <Fit t="View" w={28.500} />
        <Fit t="Optimize" w={56} />
        <Fit t="Help" w={28} />
        <div className="ml-auto mr-[3px] mt-1 flex h-[24px] w-[84px] items-center rounded bg-[#117865] pl-[7px] text-white">
          <svg width="16" height="15" viewBox="0 0 16 15" fill="none" stroke="#fff" strokeWidth="1.200"><path d="M.6 4v10h11.500v-3M3.500 10.500q1-5 6.500-5.500V1.500L15.300 6 10 10.500V7.500q-4 0-6.500 3z" /></svg>
          <Fit t="Share" w={30} className="ml-2 text-[12.500px] leading-[25px]" />
          <svg width="10" height="6" viewBox="0 0 10 6" fill="none" className="ml-[5px]"><path d="M.5.5L5 5 9.500.5" stroke="#fff" strokeWidth="1.200" /></svg>
        </div>
      </div>

      {/* Ribbon */}
      <div className="flex h-[92px] shrink-0">
        <Group w="w-[161px]" label="Clipboard" lw={43}>
          <div className="flex w-[50px] flex-col pl-[13px] text-[12px] leading-4 text-[#c8c6c4]">
            <svg width="34" height="34" viewBox="13 74 34 34" fill="none">
              <path d="M22 81.500h-4v24h12M32 81.500h5V88" stroke="#f5d5a5" strokeWidth="2" />
              <path d="M22 84.500v-4h3q0-3 2.500-3t2.500 3h3v4z" stroke="#c8c6c4" fill="#fafafa" />
              <rect x="30.500" y="89.500" width="13" height="17" fill="#fafafa" stroke="#bebbb8" />
            </svg>
            <div className="mt-[2px]"><Fit t="Paste" w={28} /></div>
          </div>
          <div className="flex flex-col pl-[2px] text-[12.500px] leading-[18px] text-[#c8c6c4]">
            <div className="flex h-[19px] items-center gap-1">
              <svg width="16" height="17" viewBox="0 0 16 17" fill="none"><path d="M5 1l5 11M11 1L6 12" stroke="#a19f9d" strokeWidth="1.200" /><circle cx="5" cy="13.500" r="2" stroke="#9fcbe6" strokeWidth="1.200" /><circle cx="11" cy="13.500" r="2" stroke="#9fcbe6" strokeWidth="1.200" /></svg>
              <Fit t="Cut" w={19} />
            </div>
            <div className="mt-[5px] flex h-[19px] items-center gap-1">
              <svg width="16" height="17" viewBox="0 0 16 17" fill="none" stroke="#b3b0ad"><path d="M4.500 13.500h-4V.5h8v2" /><path d="M5.500 3.500h6l4 4v9h-10zM11.500 3.500v4h4M7.500 10.500h6M7.500 13.500h6" /></svg>
              <Fit t="Copy" w={27} />
            </div>
            <div className="mt-[5px] flex h-[19px] items-center gap-1">
              <svg width="17" height="17" viewBox="0 0 17 17" fill="none"><path d="M1 8q4 0 6-3l5 6q-1 4-4 5-2-1-3-3-2-1-4-5z" fill="#fbe0c8" stroke="#f1c9a5" /><path d="M7 4l6 7 1.500-1.500-2-2.500 4-4q.500-2.500-2-2l-4 4-2-2z" fill="#fafafa" stroke="#a9a7a5" strokeWidth="1.100" /></svg>
              <Fit t="Format painter" w={78} className="-ml-px" />
            </div>
          </div>
        </Group>
        <Group
          w="w-[370px]" pl="pl-[5px]" label="Data" lw={20}
          items={[
            { i: "get", w: 46, a: ["Get", 19], b: ["data", 23], chev: true },
            { i: "excel", w: 52, a: ["Excel", 26], b: ["workbook", 53] },
            { i: "lake", w: 68, a: ["OneLake", 46], b: ["data hub", 46], chev: true },
            { i: "sql", w: 35, a: ["SQL", 21], b: ["Server", 33] },
            { i: "enter", w: 45, a: ["Enter", 27], b: ["data", 23] },
            { i: "verse", w: 51, a: ["Dataverse", 52] },
            { i: "recent", w: 59, a: ["Recent", 36], b: ["sources", 40], chev: true },
          ]}
        />
        <Group
          w="w-[117px]" pl="pl-[9px]" label="Queries" lw={33}
          items={[
            { i: "transform", w: 53, a: ["Transform", 52], b: ["data", 23], chev: true },
            { i: "refresh", w: 48, a: ["Refresh", 39] },
          ]}
        />
        <Group
          w="w-[147px]" pl="pl-[8px]" label="Insert" lw={25}
          items={[
            { i: "newvis", w: 40, a: ["New", 24], b: ["visual", 30] },
            { i: "textbox", w: 39, a: ["Text", 21], b: ["box", 19] },
            { i: "more", w: 51, a: ["More", 28], b: ["visuals", 34], chev: true },
          ]}
        />
        <Group
          w="w-[188px]" pl="pl-[6px]" label="Calculations" lw={53}
          items={[
            { i: "fx", w: 76, a: ["New visual", 57], b: ["calculation", 57], chev: true, dim: true },
            { i: "calc", w: 47, a: ["New", 24], b: ["measure", 45] },
            { i: "quick", w: 51, a: ["Quick", 30], b: ["measure", 45] },
          ]}
        />
        <Group w="w-[74px]" pl="pl-[6px]" label="Sensitivity" lw={44} items={[{ i: "sens", w: 61, a: ["Sensitivity", 53], chev: true, dim: true }]} />
        <Group w="w-[59px]" pl="pl-[2px]" label="Share" lw={25} items={[{ i: "publish", w: 54, a: ["Publish", 38] }]} />
        <Group w="w-[60px]" pl="pl-[2px]" label="Copilot" lw={32} items={[{ i: "copilot", w: 54, a: ["Copilot", 38] }]} />
        <svg width="9" height="6" viewBox="0 0 9 6" fill="none" className="mb-[6px] ml-auto mr-[2px] self-end"><path d="M1 5l3.500-3.500L8 5" stroke="#252423" strokeWidth="1.800" /></svg>
      </div>

      {/* Body */}
      <div className="flex h-[667px] shrink-0">
        <div className="w-[41px] shrink-0 border-r border-[#dcdad8] bg-[#f3f2f1]">
          <div className="flex h-[40px] w-[40px] items-center border-l-[3px] border-[#117865] pl-[10px]">
            <svg width="15" height="15" viewBox="0 0 15 15" fill="none" stroke="#111"><path d="M1.500 0v13.500H15" strokeWidth="1.300" /><path d="M3.500 3.500h2v7.500h-2zM7.500 6h2v5h-2zM11.500 2h2v9h-2z" /></svg>
          </div>
          <svg width="40" height="120" viewBox="0 200 40 120" fill="none" stroke="#797775">
            <path d="M13.500 212.500h15v14h-15zM13.500 214h15M13.500 218.500h15M13.500 222.500h15M18.500 214v12M23.500 214v12" strokeWidth="1.200" />
            <path d="M22.500 251.500h7v6h-7zM22.500 253.500h7M12.500 257.500h7v6h-7zM12.500 259.500h7M22.500 262.500h7v6h-7zM22.500 264.500h7M16 257v-3.500h6M16 264v3h6" strokeWidth="1.200" />
            <path d="M15.500 300v-7.500h7l3 3.500v9q0 2-2 2M22 292.500v4h3.500M27 296v9l-2 3" strokeWidth="1.200" />
            <text x="11" y="307.500" fontSize="6.500" fill="#605e5c" stroke="none" fontWeight="600" fontFamily='"Open Sans", sans-serif'>DAX</text>
          </svg>
        </div>

        <div className="flex w-[1037px] shrink-0 flex-col">
          <div className="flex h-[632px]">
            {/* Report canvas */}
            <div className="w-[1005px] shrink-0 border-r border-[#b9bfd6] bg-white">
              <div className="flex h-[220px] flex-col overflow-hidden border-l border-t border-[#2f4f98] bg-[#e8192e]">
                <div className="flex h-[82px] shrink-0 items-start">
                  <svg width="134" height="30" viewBox="51 176 134 30" className="ml-[9px] mt-[15px] shrink-0">
                    <rect x="52.500" y="177.500" width="29" height="25" rx="4" fill="none" stroke="#f08a92" />
                    <path d="M80 176h5v10h-5z" fill="#e8192e" />
                    <path d="M56 191L84 178 66 192z" fill="#1f4f9e" />
                    <path d="M84 178L72 197q-4 3-9 0z" fill="#c31525" />
                    <path d="M55 192l9 1 6-4-5 6z" fill="#e9dfe6" />
                    <text x="86" y="194.500" fontSize="12" fontWeight="700" textLength="97" lengthAdjust="spacingAndGlyphs" fill="#1f4f9e" stroke="#1f4f9e" strokeWidth=".5" fontFamily='"Liberation Sans", sans-serif'>ASTRA MOTOR</text>
                    <text x="134" y="205" fontSize="6" fontWeight="700" fontStyle="italic" textLength="49" fill="#a03a5c" fontFamily='"Liberation Sans", sans-serif'>member of ASTRA</text>
                  </svg>
                  <Slicer t="Kota" w={19} bw="w-[100px]" cls="ml-[350px] mt-[23px]" />
                  <Slicer t="Dealer" w={27.500} bw="w-[101px]" cls="ml-[15px] mt-[23px]" />
                  <Slicer t="Month" w={26} bw="w-[102px]" cls="ml-[14px] mt-[23px]" />
                  <Slicer t="Year" w={18} bw="w-[101px]" cls="ml-[6px] mt-[22px]" />
                  <svg width="36" height="36" viewBox="0 0 36 36" className="ml-[5px] mt-[28px]">
                    <rect width="36" height="36" fill="#ee1c31" />
                    <path d="M9 4l1.500 4 2.500 3-2 2 1 4 2 3-2 3v9l-1.500-6-2 6 0-8-2-2 2-4-2.500-5 2.500-2z" fill="#fff" />
                    <path d="M13 16Q16 10 22 10q6 .5 7.500 8l-2-3-2 1-2-3-2 4-2-3-2 4z" fill="#fff" />
                    <path d="M14 17.500l3 1 1 2 2-2 3 2 2-2 2 2 2-2q1 3-1 5H14z" fill="#fff" opacity=".9" />
                    <path d="M13 24.500h4v2h-2v1h2v5h-4v-2h2v-1h-2zM18 24.500h3v8h-3zM22 24.500h3v8h-3zM26 24.500h4v4l-1.500 4H26z" fill="#fff" opacity=".75" />
                  </svg>
                </div>
                <div className="ml-[50px] flex h-[137px] w-[902px] shrink-0 border border-b-0 border-[#4c8fd0] bg-white shadow-[9px_10px_10px_rgba(60,0,10,0.45)]">
                  <div className="ml-[15px] mt-[29px] flex h-[73px] w-[130px] shrink-0 flex-col rounded-[8px] border border-[#a3a3a3] font-['Roboto']">
                    <div className="mt-[12px] flex justify-center text-[13px] leading-[16px]"><Fit t="Total" w={28} /></div>
                    <div className="mt-[5px] flex justify-center text-[24px] font-medium leading-[28px]"><Fit t="923" w={39} /></div>
                  </div>
                  <WorkTable />
                  <div className="ml-[2px] mt-[11px] h-[53px] w-[6px] shrink-0 rounded-full bg-[#b1afad]" />
                  <StatusDonut />
                  <DistancePie />
                </div>
              </div>
              <div className="flex h-[343px]">
                <div className="flex w-[485px] shrink-0 flex-col">
                  <ServicePie />
                  <div className="flex pl-[29px]">
                    <PartsTable />
                    <div className="ml-[3px] mt-[1px] h-[16px] w-[6px] rounded-full bg-[#b1afad]" />
                    <div className="ml-[9px]"><IssuesTable /></div>
                    <div className="ml-[2px] mt-[1px] h-[28px] w-[5px] rounded-full bg-[#b1afad]" />
                  </div>
                </div>
                <div className="mt-[2px] h-[341px] w-[2px] shrink-0 bg-[#e2364a]" />
                <div className="flex grow flex-col">
                  <DealerChart />
                  <div className="flex h-[21px] justify-center pr-[6px] font-['Roboto'] text-[13px] leading-[21px]"><Fit t="Mapping" w={49} /></div>
                  <div className="pl-[16px]"><MapVisual /></div>
                </div>
              </div>
              <div className="flex h-[2px]">
                <div className="h-[2px] w-[24px] bg-[#b3213a]" />
                <div className="ml-[451px] h-[2px] w-[24px] bg-[#b3213a]" />
                <div className="ml-auto h-[2px] w-[24px] bg-[#b3213a]" />
              </div>
              <div className="h-[2px] bg-[repeating-linear-gradient(90deg,#605e5c_0px,#605e5c_2px,#ffffff_2px,#ffffff_4px)]" />
            </div>
            {/* Filters pane */}
            <div className="flex w-[32px] flex-col items-center bg-white pt-[12px]">
              <Dbl flip />
              <svg width="13" height="14" viewBox="0 0 13 14" fill="none" className="mt-[15px]"><path d="M12 1v12L7.500 9H3L1 5.500h6.500z" stroke="#252423" strokeWidth="1.200" /></svg>
              <div className="mt-[7px] text-[14.500px] font-semibold leading-[16px] [writing-mode:vertical-rl]">Filters</div>
            </div>
          </div>
          {/* Page tabs */}
          <div className="flex h-[35px] bg-white text-[12px]">
            <div className="flex w-[128px] shrink-0 border-r border-[#b3b0ad] bg-[#f3f2f1]">
              <svg width="127" height="35" viewBox="41 792 127 35" fill="none">
                <path d="M53.500 799.500h18v11h-18zM62.500 811v2.500M58 813.500h9" stroke="#484644" strokeWidth="1.300" />
                <path d="M51 820.500h24v1.500q0 1-1 1H52q-1 0-1-1z" fill="#117865" />
                <rect x="101.500" y="797.500" width="12" height="19" rx="1.500" stroke="#484644" strokeWidth="1.300" />
                <path d="M106.500 813.500h2" stroke="#484644" strokeWidth="1.500" />
                <path d="M139.500 806v8l-5-4z" fill="#c8c6c4" />
                <path d="M157 806v8l5-4z" fill="#111" />
              </svg>
            </div>
            {pageTabs.map((p, i) => (
              <div key={p[0]} className={"flex shrink-0 flex-col " + p[2] + (i < 5 ? " border-r border-[#c8c6c4]" : "")}>
                <div className={"flex h-[31px] justify-center leading-[38px] " + (i === 1 ? "font-semibold" : "")}>
                  <Fit t={p[0]} w={p[1]} className={i === 1 ? "ml-[13px]" : ""} />
                  {i === 1 && <span className="-mr-1 ml-[9px] w-[8px] text-[11px] leading-[18px]">x</span>}
                </div>
                {i === 1 && <div className="h-[4px] bg-[#117865]" />}
              </div>
            ))}
            <div className="ml-auto flex w-[39px] shrink-0 items-center justify-center bg-[#117865]">
              <svg width="11" height="11" viewBox="0 0 11 11"><path d="M0 5.500h11M5.500 0v11" stroke="#fff" strokeWidth="2.400" /></svg>
            </div>
          </div>
        </div>

        {/* Visualizations */}
        <div className="flex w-[181px] shrink-0 flex-col border-l border-[#e1dfdd] bg-[#f3f2f1]">
          <div className="mt-[9px] flex h-[22px] items-center justify-between pl-2 pr-[8px] leading-[21px]">
            <Fit t="Visualizations" w={99} className="text-[15.500px] font-semibold" />
            <Dbl />
          </div>
          <div className="mt-[5px] pl-2 text-[12px] font-semibold leading-[20px]"><Fit t="Build visual" w={62} /></div>
          <div className="mt-[1px] flex h-[32px] pl-2">
            <div className="h-8 w-8 rounded-[2px] bg-[#d2d0ce]">
              <svg width="32" height="32" viewBox="0 0 32 32" fill="none">
                <path d="M4 4.500h19" stroke="#252423" />
                <rect x="4.500" y="9.500" width="23" height="7" fill="#117865" stroke="#252423" strokeDasharray="2 1" />
                <rect x="4.500" y="20.500" width="23" height="7" fill="#117865" stroke="#252423" strokeDasharray="2 1" />
              </svg>
            </div>
            <svg width="28" height="28" viewBox="0 0 28 28" fill="none" className="ml-[36px] mt-[2px]" stroke="#3b3a39">
              <path d="M8 25.500H2.500v-23h10l7 7v2M12.500 2.500v7h7" strokeWidth="1.200" />
              <path d="M26 10q-1-1-2.500 1L16 19l2.500 2.500 7-9q1.500-2 .5-2.500z" fill="#fff" />
              <path d="M16 19.500l2.500 2.500q-1 4-9 3.500 3-1 3-3.500 1-3 3.500-2.500z" fill="#605e5c" />
            </svg>
          </div>
          <svg width="180" height="10" viewBox="0 0 180 10" fill="none" className="mt-[3px] shrink-0"><path d="M0 9.500h16l8-7.500 8 7.500h148" stroke="#8a8886" /></svg>
          <div className="ml-[6px] mt-[6px] grid w-[168px] grid-cols-6">
            {vizIcons.map((v, i) => (
              <div key={i} className="flex h-7 w-7 items-center justify-center">
                <svg width="18" height="18" viewBox="0 0 18 18" overflow="visible">{v}</svg>
              </div>
            ))}
          </div>
          <div className="mt-[12px] flex h-[3px] gap-[4px] pl-[13px]">
            <div className="h-[2px] w-[2px] bg-[#252423]" /><div className="h-[2px] w-[2px] bg-[#252423]" /><div className="h-[2px] w-[2px] bg-[#252423]" />
          </div>
          <div className="mt-[17px] border-t border-[#dcdad8]" />
          <div className="pl-[12px] pt-[8px] text-[12px] leading-[20px]"><Fit t="Values" w={34} /></div>
          <div className="ml-1 mt-[2px] flex h-[28px] w-[170px] items-center border border-dashed border-[#c8c6c4] bg-white pl-[10px] text-[12px] leading-[27px]"><Fit t="Add data fields here" w={107} /></div>
          <div className="mt-[9px] pl-[12px] text-[12px] font-semibold leading-[20px] text-[#484644]"><Fit t="Drill through" w={70} /></div>
          <div className="mt-[5px] flex h-[20px] items-center justify-between pl-[12px] pr-[22px] text-[12px] leading-[20px]"><Fit t="Cross-report" w={67} /><Toggle /></div>
          <div className="mt-[7px] flex h-[20px] items-center justify-between pl-[12px] pr-[22px] text-[12px] leading-[20px]"><Fit t="Keep all filters" w={75} /><Toggle /></div>
          <div className="ml-1 mt-[8px] flex h-[27px] w-[170px] items-center border border-dashed border-[#c8c6c4] bg-white pl-[8px] text-[12px] leading-[25px]"><Fit t="Add drill-through fields here" w={151} /></div>
        </div>

        {/* Data */}
        <div className="flex grow flex-col border-l border-[#e1dfdd] bg-[#f3f2f1]">
          <div className="mt-[9px] flex h-[22px] items-center justify-between pl-2 pr-[5px] leading-[21px]">
            <Fit t="Data" w={34} className="text-[15.500px] font-semibold" />
            <Dbl />
          </div>
          <div className="ml-[4px] mt-[14px] flex h-[24px] w-[172px] items-center rounded-[3px] border border-[#c8c6c4] border-b-[#605e5c] bg-white pl-[12px] text-[13px] leading-[23px] text-[#605e5c]">
            <svg width="15" height="15" viewBox="0 0 15 15" fill="none"><circle cx="6" cy="6" r="5" stroke="#605e5c" strokeWidth="1.100" /><path d="M9.500 9.500L14 14" stroke="#605e5c" strokeWidth="1.100" /></svg>
            <Fit t="Search" w={41} className="ml-[6px]" />
          </div>
          <div className="mt-[10px]">
            {dataTables.map((d) => (
              <div key={d[0]} className="flex h-6 items-center pl-[15px] text-[12px] leading-[24px]">
                <svg width="7" height="12" viewBox="0 0 7 12" fill="none"><path d="M.7.7L6 6 .7 11.300" stroke="#605e5c" /></svg>
                <svg width="15" height="15" viewBox="0 0 15 15" fill="none" className="ml-[7px]" stroke="#252423">
                  <path d="M7 12.500H2q-1.500 0-1.500-1.500V3Q.5 1.500 2 1.500h8q1.500 0 1.500 1.500v3M.5 5.500h11M.5 9h7M4.300 1.500v11M8 1.500v4" />
                  {d[2] ? (
                    <path d="M7.500 7.500h6v6.500h-6zM7.500 10h6M7.500 12h6M10.500 10v4" fill="#f3f2f1" strokeWidth="1.200" />
                  ) : (
                    <path d="M11.500 6v5q0 1.500-1.500 1.500H7M7 9h4.500M8 5.500v7" />
                  )}
                </svg>
                <Fit t={d[0]} w={d[1]} className="ml-[3px]" />
              </div>
            ))}
          </div>
        </div>
      </div>

      {/* Status bar */}
      <div className="flex h-[23px] shrink-0 items-center border-t border-[#dcdad8] bg-[#f3f2f1] pl-1 text-[12px] leading-[25px] text-[#3b3a39]">
        <Fit t="Page 2 of 8" w={59.500} />
        <svg width="126" height="16" viewBox="1036 831 126 16" fill="none" stroke="#605e5c" className="ml-auto">
          <path d="M1037 840h4" strokeWidth="1.600" />
          <path d="M1045 839.500h100M1095.500 836v7M1151 839.500h8M1155 835.500v8" />
          <path d="M1083 834v11" strokeWidth="3.500" />
        </svg>
        <Fit t="78%" w={23} className="ml-[10px] leading-[23px] text-[#605e5c]" />
        <svg width="16" height="12" viewBox="0 0 16 12" fill="none" stroke="#484644" className="ml-[19px]"><rect x=".5" y=".5" width="15" height="11" /><path d="M2.500 4.500v-2h3M10.500 2.500h3v2M13.500 7.500v2h-3M5.500 9.500h-3v-2" /></svg>
        <Fit t="Update available (click to download)" w={192} className="ml-[14px] mr-[1px]" />
      </div>
    </div>
  );
}
